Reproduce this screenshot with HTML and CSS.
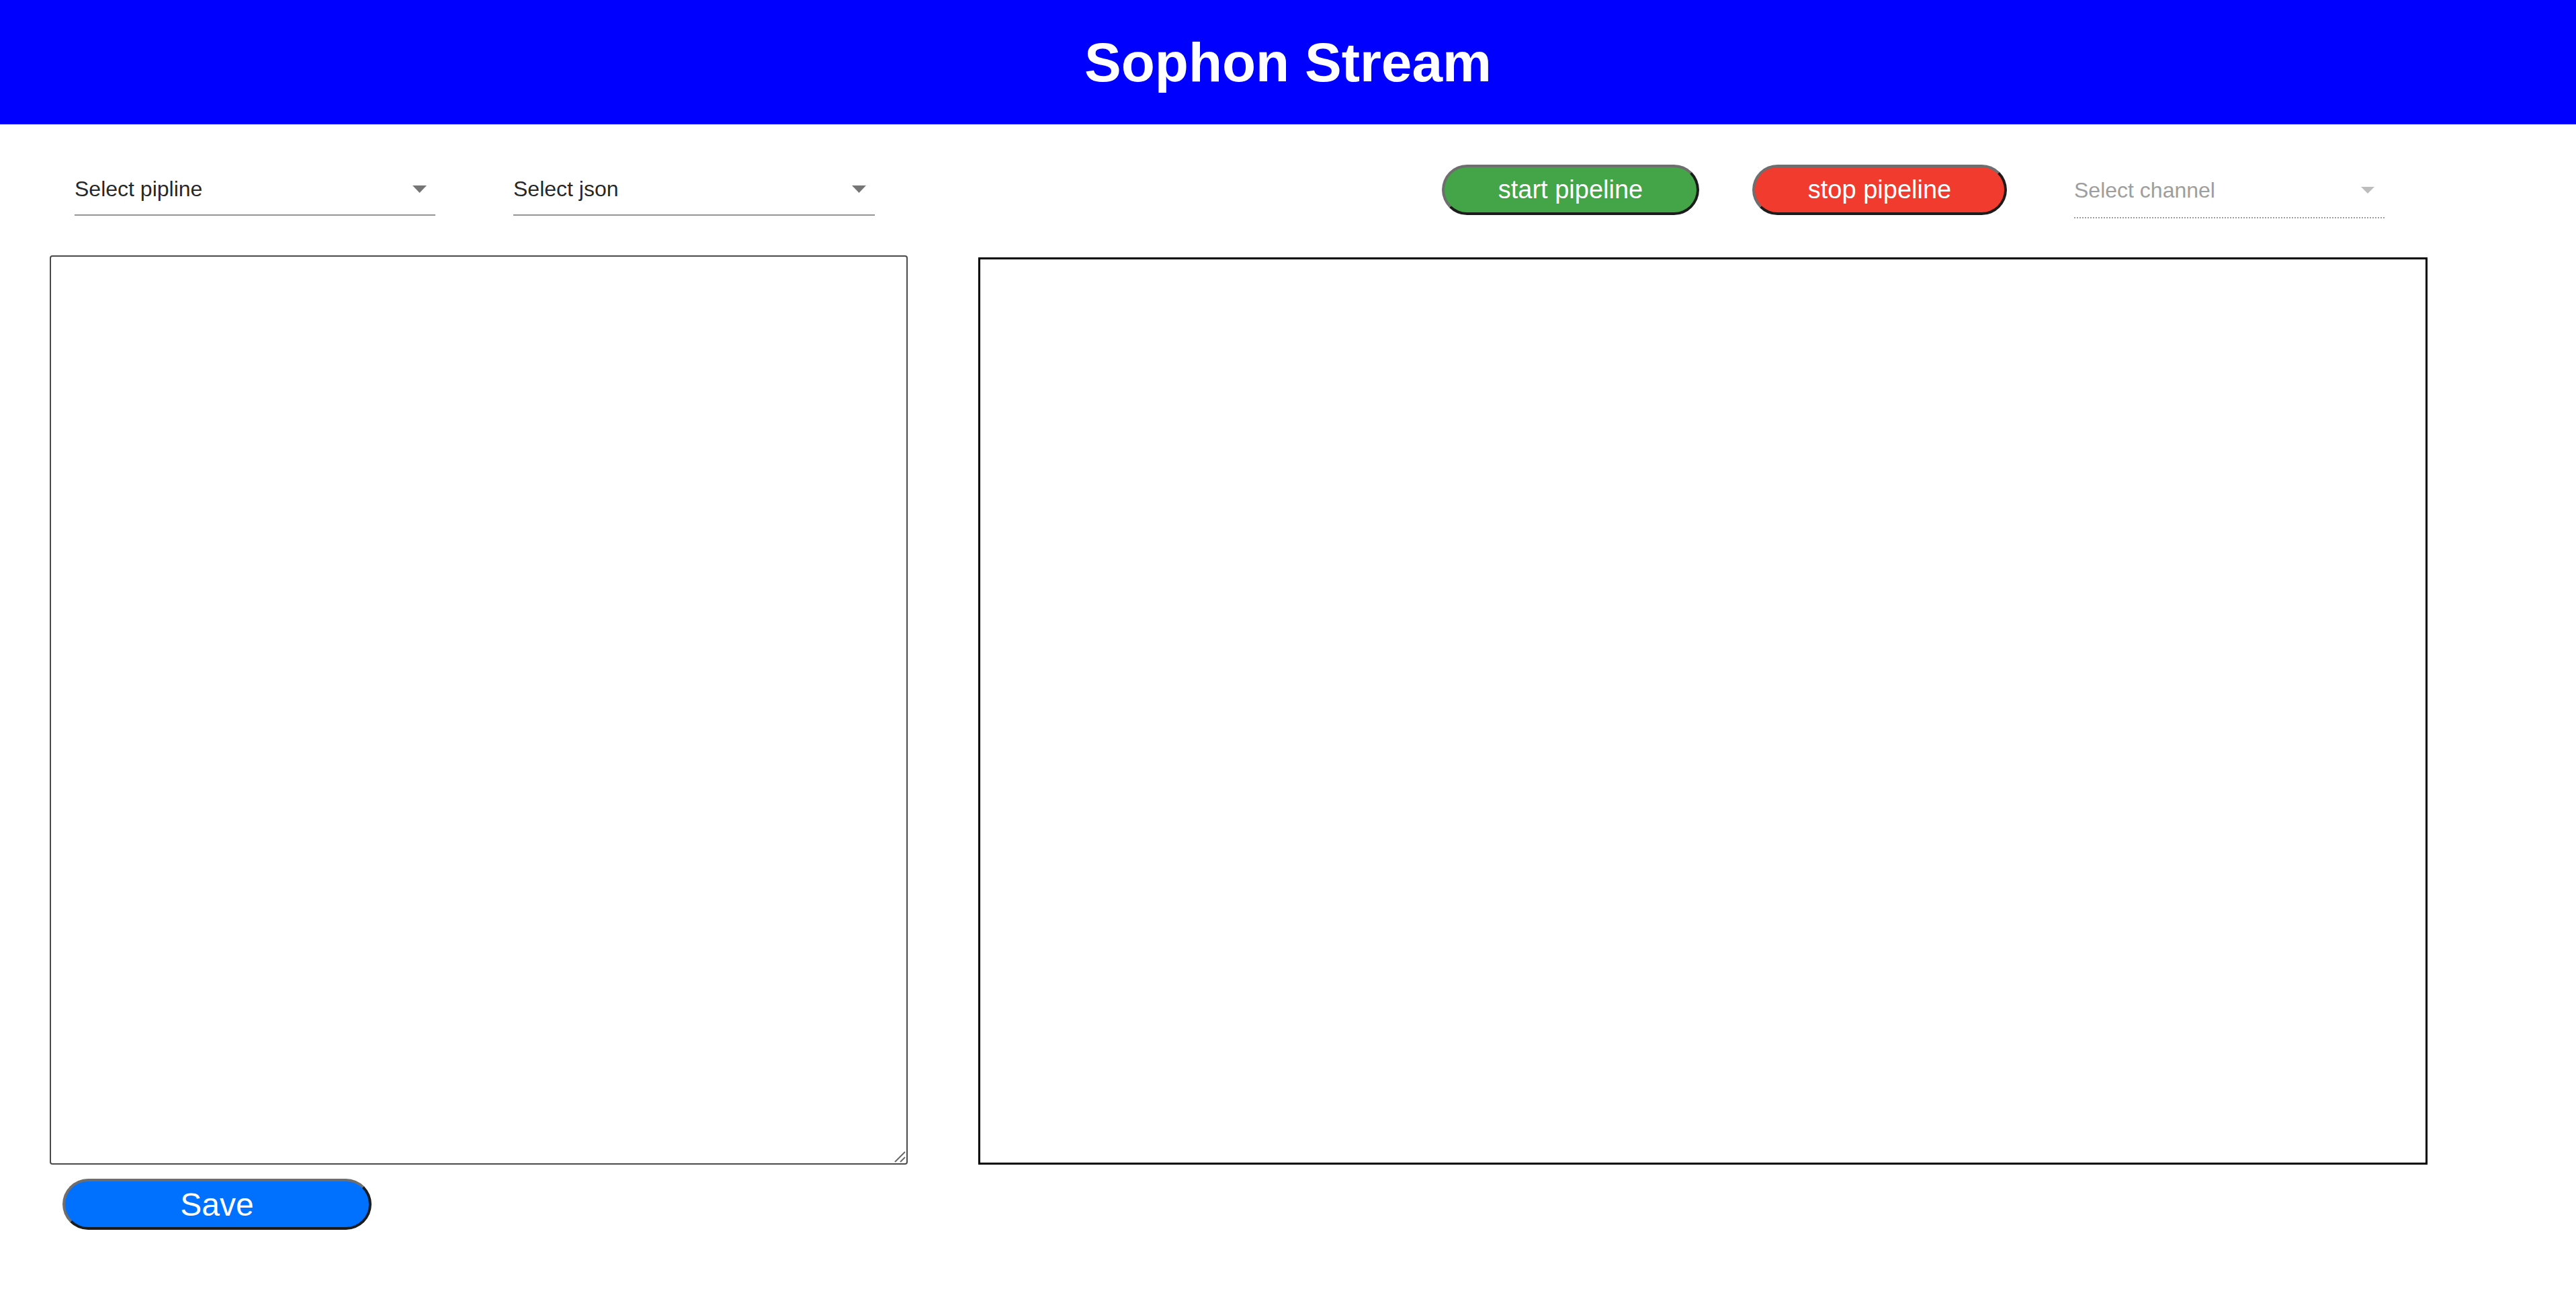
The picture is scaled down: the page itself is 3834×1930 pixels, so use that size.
FILE: index.html
```html
<!DOCTYPE html>
<html lang="en">
<head>
<meta charset="utf-8">
<title>Sophon Stream</title>
<link rel="stylesheet" href="styles.css">
</head>
<body>
<header class="topbar">
  <h1 class="title">Sophon Stream</h1>
</header>
<section class="controls">
  <div class="select select-pipeline">
    <span class="select-text">Select pipline</span>
    <svg class="arrow" width="21" height="11" viewBox="0 0 21 11"><path d="M0 0 L10.5 11 L21 0 Z" fill="#757575"/></svg>
  </div>
  <div class="select select-json">
    <span class="select-text">Select json</span>
    <svg class="arrow" width="21" height="11" viewBox="0 0 21 11"><path d="M0 0 L10.5 11 L21 0 Z" fill="#757575"/></svg>
  </div>
  <button class="btn btn-start">start pipeline</button>
  <button class="btn btn-stop">stop pipeline</button>
  <div class="select select-channel">
    <span class="select-text">Select channel</span>
    <svg class="arrow arrow-disabled" width="20" height="10" viewBox="0 0 20 10"><path d="M0 0 L10 10 L20 0 Z" fill="#bdbdbd"/></svg>
  </div>
</section>
<main class="workspace">
  <div class="editor-col">
    <div class="editor-wrap">
      <textarea class="editor"></textarea>
      <svg class="grip" width="18" height="18" viewBox="0 0 18 18"><path d="M2 17 L17 2 M10 17 L17 10" stroke="#6a6a6a" stroke-width="2" fill="none"/></svg>
    </div>
    <button class="btn btn-save">Save</button>
  </div>
  <div class="viewer"></div>
</main>
</body>
</html>
```

FILE: styles.css
```css
html, body {
  margin: 0;
  padding: 0;
  background: #ffffff;
  font-family: "Liberation Sans", Arial, Helvetica, sans-serif;
}

.topbar {
  height: 185px;
  background: #0000ff;
  display: flex;
  align-items: center;
  justify-content: center;
}

.title {
  margin: 0;
  color: #ffffff;
  font-size: 82px;
  font-weight: 700;
  line-height: 185px;
}

.controls {
  display: flex;
  align-items: flex-start;
  padding-left: 111px;
  height: 195px;
}

.select {
  display: flex;
  align-items: center;
  justify-content: space-between;
  box-sizing: content-box;
  height: 46px;
  line-height: 46px;
  font-size: 32px;
  color: rgba(0, 0, 0, 0.87);
  border-bottom: 2px solid #949494;
  margin-top: 73px;
  padding-bottom: 15px;
}

.select-pipeline {
  width: 537px;
}

.select-json {
  width: 538px;
  margin-left: 116px;
}

.select-channel {
  width: 462px;
  margin-left: 100px;
  margin-top: 75px;
  padding-bottom: 17px;
  color: #9e9e9e;
  border-bottom: 2px dotted #9e9e9e;
}

.arrow {
  margin-right: 13px;
  display: block;
}

.arrow-disabled {
  margin-right: 15px;
}

.btn {
  box-sizing: border-box;
  height: 75px;
  border-radius: 40px;
  border-width: 4px;
  border-style: solid;
  border-color: #6e6e6e #1c1c1c #1c1c1c #6e6e6e;
  color: #ffffff;
  font-family: "Liberation Sans", Arial, Helvetica, sans-serif;
  font-size: 38px;
  padding: 0;
  cursor: pointer;
}

.btn-start {
  width: 383px;
  margin-left: 844px;
  margin-top: 60px;
  background: #43a547;
}

.btn-stop {
  width: 379px;
  margin-left: 79px;
  margin-top: 60px;
  background: #f13b2f;
}

.workspace {
  display: flex;
  align-items: flex-start;
  padding-left: 74px;
}

.editor-col {
  display: flex;
  flex-direction: column;
  align-items: flex-start;
}

.editor-wrap {
  position: relative;
  width: 1277px;
  height: 1353px;
}

.editor {
  display: block;
  box-sizing: border-box;
  width: 1277px;
  height: 1353px;
  border: 2px solid #4a4a4a;
  border-radius: 4px;
  margin: 0;
  padding: 4px;
  resize: none;
  font-family: "Liberation Mono", monospace;
  font-size: 26px;
}

.grip {
  position: absolute;
  right: 3px;
  bottom: 3px;
  pointer-events: none;
}

.btn-save {
  width: 460px;
  height: 76px;
  margin-left: 19px;
  margin-top: 21px;
  font-size: 48px;
  background: #0070ff;
}

.viewer {
  box-sizing: border-box;
  width: 2157px;
  height: 1350px;
  margin-left: 105px;
  margin-top: 3px;
  border: 3px solid #000000;
  background: #ffffff;
}
```
